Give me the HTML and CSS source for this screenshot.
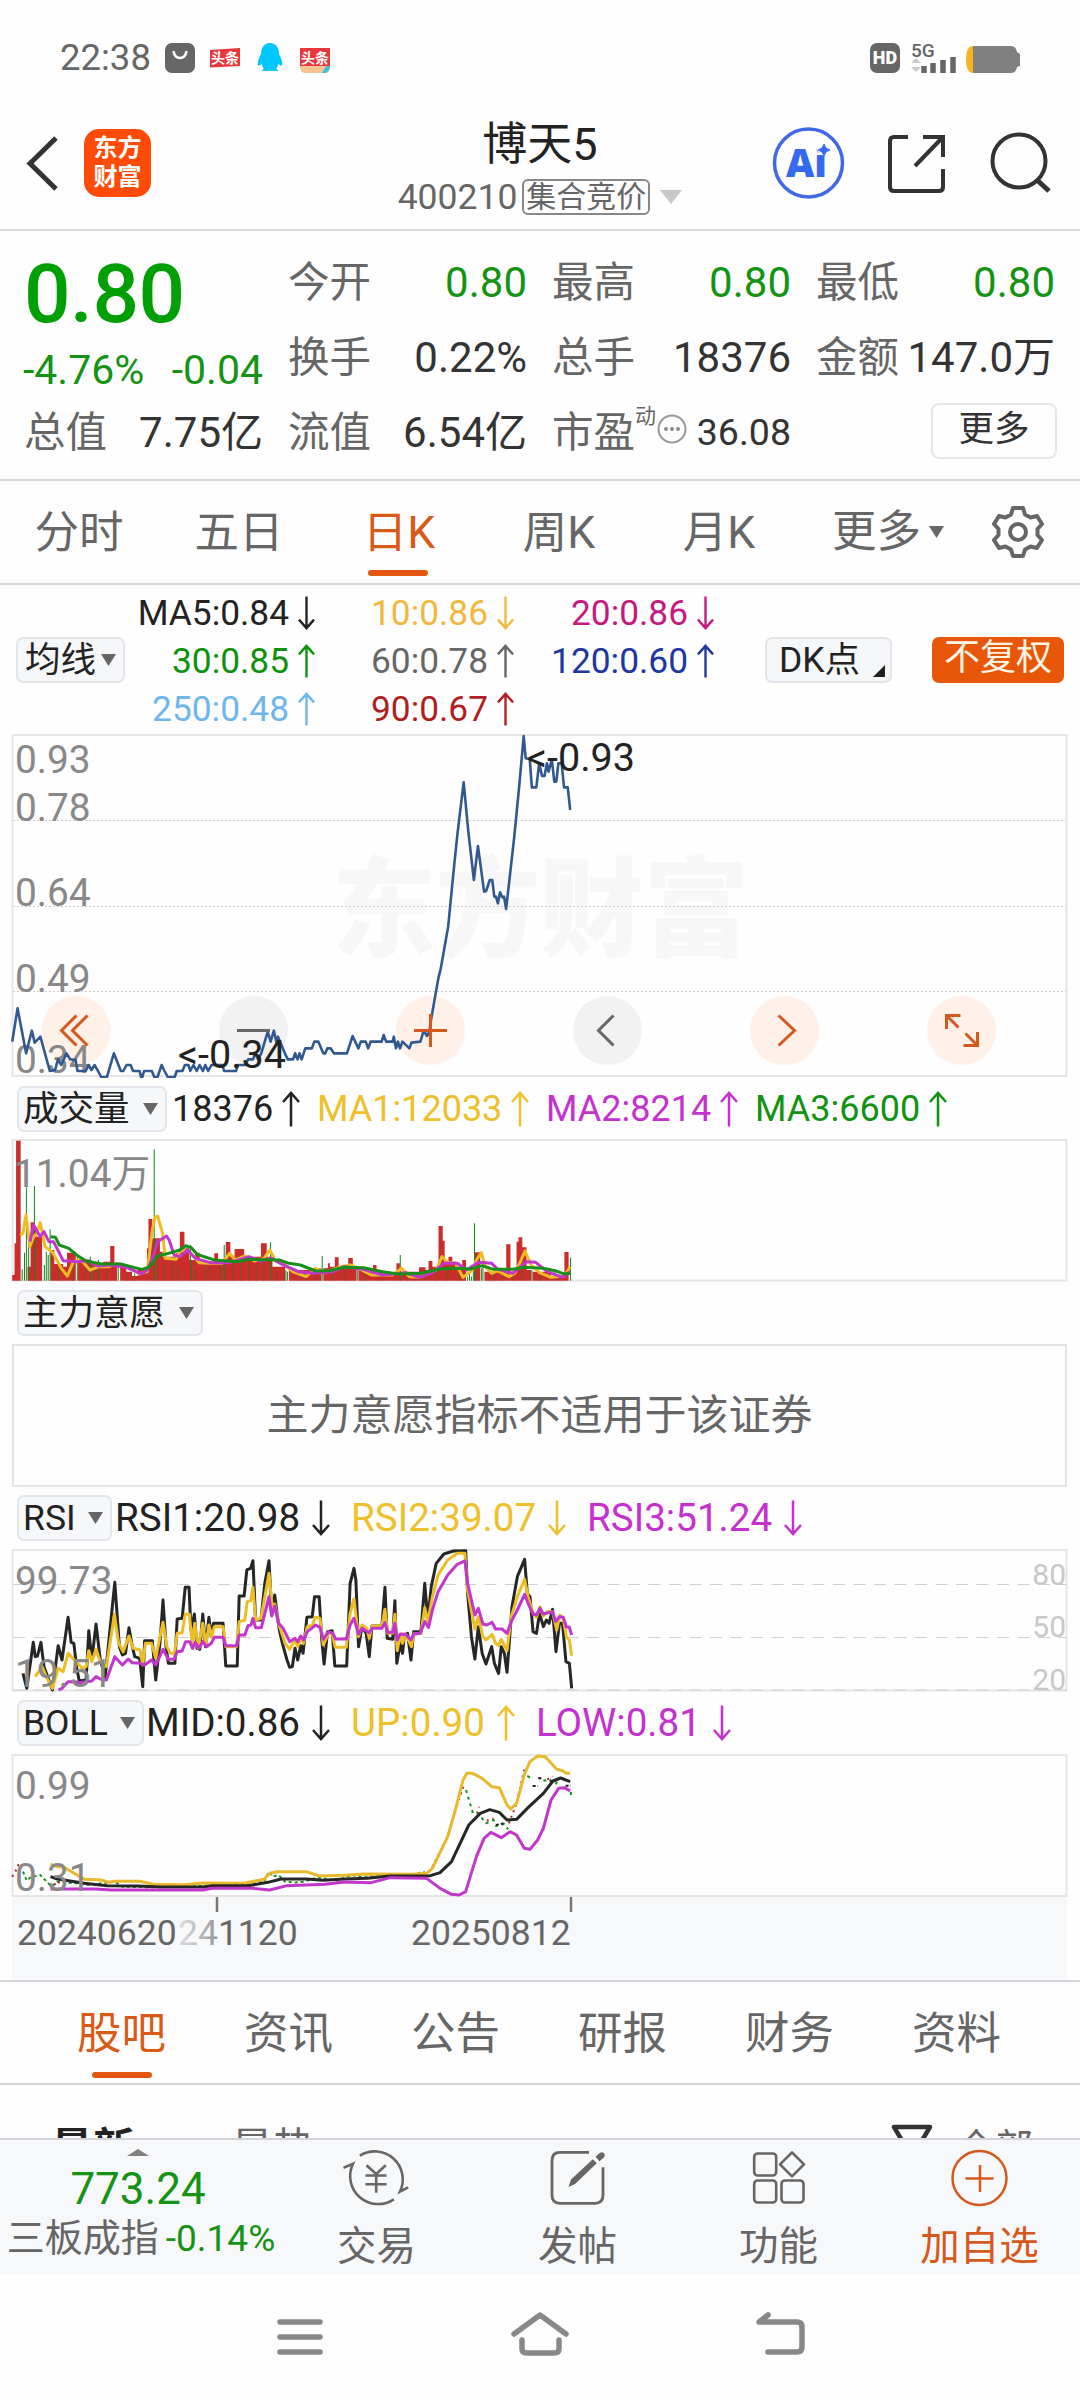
FILE: index.html
```html
<!DOCTYPE html>
<html lang="zh-CN">
<head>
<meta charset="utf-8">
<title>博天5 400210</title>
<link rel="stylesheet" href="styles.css">
</head>
<body>
<svg class="defs" width="0" height="0">
  <symbol id="up" viewBox="0 0 18 36"><path d="M9 35.500V2M1 11L9 2l8 9" fill="none" stroke="currentColor" stroke-width="2.500"/></symbol>
  <symbol id="down" viewBox="0 0 18 36"><path d="M9 .5v33.500M1 25L9 34l8-9" fill="none" stroke="currentColor" stroke-width="2.500"/></symbol>
</svg>
<div class="screen">
  <div class="status">
    <span class="clock">22:38</span>
    <svg class="status-left" width="180" height="40" viewBox="160 37 180 40">
      <rect x="165" y="43" width="30" height="30" rx="7" fill="#666"/>
      <path d="M173.500 51q1 7 6.500 7t6.500-7" fill="none" stroke="#fff" stroke-width="2.500"/>
      <path d="M210 50l30-2v18l-30 1.500z" fill="#e9383c"/>
      <text x="225" y="63" class="tiny">头条</text>
      <path d="M270 43c-6 0-9 5-9 11-2 4-4 8-3 12l4-2c0 2 1 4 2 5-2 1-3 2-2 2h16c1 0 0-1-2-2 1-1 2-3 2-5l4 2c1-4-1-8-3-12 0-6-3-11-9-11z" fill="#00c8ff"/>
      <path d="M300 48h30v18h-30z" fill="#e9383c"/>
      <path d="M300 66h30q0 7-5 7h-20q-5 0-5-7z" fill="#f6c58f"/>
      <path d="M326 66h4q0 6-5 7h-3z" fill="#40bfd8"/>
      <text x="315" y="63" class="tiny">头条</text>
    </svg>
    <svg class="status-right" width="160" height="40" viewBox="865 37 160 40">
      <rect x="870" y="43" width="30" height="30" rx="7" fill="#666"/>
      <text x="885" y="64" class="hd">HD</text>
      <text x="911" y="57" class="net">5G</text>
      <path d="M911 63l5-5 5 5zM911 67l5 5 5-5z" fill="#ccc"/>
      <path d="M924 73v-7M933 73V63M943 73V60M953 73V57" stroke="#666" stroke-width="5.500"/>
      <path d="M973 46h38q5 0 6 6l3 2v12l-3 1q-1 6-6 6h-38z" fill="#808080"/>
      <path d="M973 46h-1q-6 1-6 13.500T972 73h1z" fill="#f7b320"/>
    </svg>
  </div>

  <header class="header">
    <svg class="back" width="40" height="60" viewBox="22 133 40 60"><path d="M56 138L30 163.500l26 25.500" fill="none" stroke="#333" stroke-width="5"/></svg>
    <div class="logo"><span>东方</span><span>财富</span></div>
    <div class="title-box">
      <div class="title">博天5</div>
      <div class="code"><span>400210</span><span class="auction">集合竞价</span><svg width="22" height="14"><path d="M0 0h22L11 14z" fill="#c8c8c8"/></svg></div>
    </div>
    <svg class="header-icons" width="300" height="80" viewBox="765 123 300 80" fill="none" stroke="#333" stroke-width="4">
      <circle cx="808.500" cy="163" r="34" stroke="#4169e6" stroke-width="3.500"/>
      <text x="786" y="177" class="ai">Ai</text>
      <circle cx="824" cy="148.500" r="7" fill="#fefefe" stroke="none"/>
      <path d="M824 144q1 5 6 6-5 1-6 6-1-5-6-6 5-1 6-6z" fill="#356af0" stroke="#356af0" stroke-width="1"/>
      <path d="M908 137h-14q-4 0-4 4v46q0 4 4 4h45q4 0 4-4v-18M923 137h20v20M942 138l-27 28" />
      <circle cx="1019" cy="161" r="26.500"/><path d="M1037 180l12 11" stroke-width="5"/>
    </svg>
  </header>

  <section class="quote">
    <div class="price">0.80</div>
    <div class="pair"><span>今开</span><b class="g">0.80</b></div>
    <div class="pair"><span>最高</span><b class="g">0.80</b></div>
    <div class="pair"><span>最低</span><b class="g">0.80</b></div>
    <div class="pair change g"><b>-4.76%</b><b>-0.04</b></div>
    <div class="pair"><span>换手</span><b>0.22%</b></div>
    <div class="pair"><span>总手</span><b>18376</b></div>
    <div class="pair"><span>金额</span><b>147.0万</b></div>
    <div class="pair"><span>总值</span><b>7.75亿</b></div>
    <div class="pair"><span>流值</span><b>6.54亿</b></div>
    <div class="pair pe"><span>市盈<sup>动</sup></span>
      <svg width="30" height="30" viewBox="0 0 30 30"><circle cx="15" cy="15" r="13.500" fill="none" stroke="#999" stroke-width="2"/><g fill="#888"><circle cx="9" cy="15" r="2"/><circle cx="15" cy="15" r="2"/><circle cx="21" cy="15" r="2"/></g></svg>
      <b>36.08</b></div>
    <div class="more-cell"><span class="more">更多</span></div>
  </section>

  <nav class="periods">
    <span>分时</span><span>五日</span><span class="on">日K</span><span>周K</span><span>月K</span>
    <span class="more-tab">更多<svg width="15" height="13"><path d="M0 0h15L7.500 12z" fill="#666"/></svg></span>
    <svg class="gear" width="54" height="54" viewBox="-27 -27 54 54" fill="none" stroke="#666" stroke-width="4" stroke-linejoin="round"><path d="M-5-24H5L7-17.500 12.500-14.500 19-16 24-8 19.500-3V3L24 8 19 16 12.500 14.500 7 17.500 5 24H-5L-7 17.500-12.500 14.500-19 16-24 8-19.500 3V-3L-24-8-19-16-12.500-14.500-7-17.500z"/><circle r="8"/></svg>
  </nav>

  <section class="averages">
    <span class="chip ma-chip">均线<svg width="15" height="12"><path d="M0 0h15L7.500 12z" fill="#666"/></svg></span>
    <div class="ma-grid">
      <span class="c-5">MA5:0.84<svg><use href="#down"/></svg></span><span class="c-10">10:0.86<svg><use href="#down"/></svg></span><span class="c-20">20:0.86<svg><use href="#down"/></svg></span>
      <span class="c-30">30:0.85<svg><use href="#up"/></svg></span><span class="c-60">60:0.78<svg><use href="#up"/></svg></span><span class="c-120">120:0.60<svg><use href="#up"/></svg></span>
      <span class="c-250">250:0.48<svg><use href="#up"/></svg></span><span class="c-90">90:0.67<svg><use href="#up"/></svg></span>
    </div>
    <span class="chip dk">DK点<svg width="12" height="12"><path d="M12 0v12H0z" fill="#222"/></svg></span>
    <span class="adjust">不复权</span>
  </section>

  <svg class="panel" width="1080" height="344" viewBox="0 734 1080 344">
    <text x="332" y="948" class="watermark" textLength="416" lengthAdjust="spacingAndGlyphs">东方财富</text>
    <g stroke="#ccc" stroke-width="1" stroke-dasharray="2 2"><path d="M13 820.500H1067M13 906.500H1067M13 991.500H1067"/></g>
    <rect class="frame" x="12.500" y="735" width="1054" height="341"/>
    <g fill="#fff0e8"><circle cx="76" cy="1030.500" r="34.500"/><circle cx="430.500" cy="1030.500" r="34.500"/><circle cx="784.500" cy="1030.500" r="34.500"/><circle cx="961.500" cy="1030.500" r="34.500"/></g>
    <g fill="#f2f2f2"><circle cx="253.500" cy="1030.500" r="34.500"/><circle cx="607.500" cy="1030.500" r="34.500"/></g>
    <g class="axis-label"><text x="15" y="772.500">0.93</text><text x="15" y="821">0.78</text><text x="15" y="906">0.64</text><text x="15" y="992">0.49</text><text x="15" y="1072.500">0.34</text></g>
    <g transform="translate(0 720) scale(.40816 .33333)" class="lines price-line">
      <polyline points="30,965 43,865 64,1000 78,932 85,968 99,950 122,1053 135,1050 142,1018 150,1035 163,1000 172,1018 185,1020 190,1053 210,1053 217,1035 224,1050 232,1035 248,1071 262,1071 279,1000 296,1053 302,1053 310,1035 320,1035 326,1053 342,1053 347,1078 353,1053 372,1053 378,1071 386,1071 396,1035 403,1053 411,1071 428,1071 433,1053 447,1053 453,1035 462,1035 466,1053 474,1035 482,1053 489,1035 497,1053 503,1035 510,1053 518,1035 545,1035 549,1053 578,1053 583,1035 600,1035 608,1018 620,1018 626,1000 632,1018 640,1000 656,935 663,965 671,932 677,965 681,950 698,1000 705,1018 718,1018 723,1000 729,1018 734,1000 739,1018 748,985 764,985 770,965 780,965 792,1000 797,1000 802,985 810,985 818,1000 850,1000 864,948 878,985 884,965 896,965 902,985 908,965 935,965 940,945 946,965 962,965 965,950 970,985 975,965 980,985 986,965 1003,985 1008,968 1030,965 1038,932 1046,948 1052,935 1056,900 1066,830 1074,775 1080,745 1098,620 1110,470 1120,350 1136,187 1147,330 1161,480 1171,378 1180,460 1186,515 1191,513 1200,480 1206,480 1211,530 1215,530 1220,550 1225,517 1231,532 1235,530 1240,567 1260,350 1272,200 1283,48 1288,115 1298,118 1303,202 1314,202 1321,130 1328,168 1334,168 1340,130 1344,155 1352,118 1358,185 1363,185 1368,130 1376,130 1382,202 1391,202 1397,270"/>
    </g>
    <g class="mark"><text x="527" y="770.500">&lt;-0.93</text><text x="178" y="1067.500">&lt;-0.34</text></g>
    <g fill="none" stroke="#d5591d" stroke-width="3"><path d="M76.500 1015.500l-15 15 15 15M87.500 1015.500l-15 15 15 15M414 1030.500h33M430.500 1014v33M778.500 1015.500l16 15-16 15"/><path d="M946.500 1029v-13.500h14M946.500 1015.500l12 12M977.500 1032v13.500h-14M977.500 1045.500l-12-12"/></g>
    <g fill="none" stroke="#666" stroke-width="3"><path d="M237 1030.500h33M613.500 1015.500l-15 15 15 15"/></g>
  </svg>

  <div class="ind vol">
    <span class="chip">成交量<svg width="15" height="12"><path d="M0 0h15L7.500 12z" fill="#666"/></svg></span>
    <span class="i1">18376<svg><use href="#up"/></svg></span><span class="i2">MA1:12033<svg><use href="#up"/></svg></span><span class="i3">MA2:8214<svg><use href="#up"/></svg></span><span class="i4">MA3:6600<svg><use href="#up"/></svg></span>
  </div>
  <svg class="panel" width="1080" height="143" viewBox="0 1139 1080 143">
    <rect class="frame" x="12.500" y="1140" width="1054" height="140.500"/>
    <g transform="translate(0 1070) scale(.38265 .33333)" class="lines">
      <path fill="#cb2d2c" stroke="none" d="M32 632V615H38V520H42V212H54V632ZM72 632V590H80V457H90V470H95V500H110V632ZM132 632V540H142V582H165V590H175V548H188V545H198V632ZM204 632V570H215V572H240V580H258V578H270V575H288V528H299V580H306V632ZM314 632V585H330V605H345V618H360V600H384V535H388V447H398V505H418V545H425V560H460V550H470V485H482V535H495V570H510V548H522V575H560V550H570V575H590V516H602V560H613V537H638V560H682V520H697V560H712V590H745V632ZM755 632V600H815V595H840V632ZM845 632V595H857V580H862V590H875V562H885V588H910V564H922V590H932V632ZM937 632V595H975V585H984V605H1020V610H1036V580H1045V605H1095V592H1112V600H1120V573H1130V590H1146V468H1157V512H1162V575H1172V560H1182V580H1190V600H1208V570H1218V632ZM1240 632V547H1255V632ZM1266 632V605H1323V523H1334V605H1350V515H1355V502H1365V532H1376V600H1388V632ZM1392 632V605H1440V618H1475V546H1486V632Z"/>
      <path stroke="#12851a" stroke-width="1" d="M58 632V598M64 632V548M69 632V352M75 632V500M90 632V348M116 632V585M121 632V545M126 632V555M131 632V478M202 632V560M236 632V560M257 632V570M309 632V580M403 632V238M498 632V525M586 632V525M707 632V517M747 632V600M751 632V605M842 632V558M935 632V590M1046 632V555M1222 632V620M1227 632V612M1232 632V620M1237 632V600M1240 632V460M1258 632V595M1262 632V590M1390 632V600M1450 632V603M1491 632V563"/>
      <path stroke="#74551c" stroke-width="1" d="M154 632V590M190 632V575M222 632V580M246 632V590M278 632V585M332 632V605M352 632V610M412 632V570M430 632V580M450 632V570M466 632V590M510 632V600M536 632V582M550 632V590M576 632V585M610 632V570M630 632V580M650 632V570M670 632V585M690 632V570M725 632V600M780 632V610M800 632V605M825 632V605M870 632V600M900 632V600M955 632V605M990 632V612M1065 632V615M1085 632V610M1108 632V605M1140 632V600M1170 632V600M1200 632V605M1290 632V610M1315 632V615M1342 632V610M1365 632V600M1412 632V615M1430 632V615"/>
      <polyline stroke="#edbd24" points="53,495 60,490 68,435 78,530 88,500 97,490 105,458 118,530 138,548 160,595 176,618 192,575 210,568 235,600 260,590 285,590 305,580 330,588 365,612 385,605 398,480 405,442 412,438 425,490 432,565 460,568 470,545 485,540 500,550 520,578 545,580 580,580 600,550 615,570 640,558 665,573 690,565 705,540 720,573 745,585 765,605 800,620 825,595 850,608 885,592 915,585 945,600 970,615 1025,615 1050,595 1070,620 1095,622 1140,600 1155,560 1170,578 1190,578 1210,622 1235,600 1245,570 1258,548 1268,590 1285,610 1300,602 1330,620 1345,610 1358,580 1372,543 1388,585 1410,608 1440,622 1475,618 1490,590"/>
      <polyline stroke="#c236cc" points="78,515 88,465 105,500 115,485 128,515 140,515 165,572 200,575 230,572 255,588 290,585 330,592 370,612 385,600 400,560 412,515 435,498 442,510 455,555 470,560 490,540 510,565 550,578 600,578 650,560 680,573 710,565 740,585 780,605 820,610 870,605 900,590 950,598 1000,615 1060,608 1095,622 1130,608 1160,580 1195,580 1220,600 1250,577 1285,580 1300,597 1340,610 1375,575 1400,577 1430,605 1470,622 1490,605"/>
      <polyline stroke="#178f1b" points="132,500 145,502 155,525 180,535 200,555 225,573 265,582 315,582 370,598 388,592 412,558 440,550 470,540 485,527 500,533 515,553 560,570 620,575 650,568 730,570 755,580 785,585 825,603 860,602 900,592 950,593 1000,605 1040,612 1100,610 1150,597 1190,595 1230,597 1260,587 1290,598 1340,598 1370,592 1420,595 1450,602 1475,612 1490,610"/>
    </g>
    <text x="14" y="1187" class="axis-text">11.04万</text>
  </svg>

  <div class="ind"><span class="chip">主力意愿<svg width="15" height="12"><path d="M0 0h15L7.500 12z" fill="#666"/></svg></span></div>
  <div class="empty">主力意愿指标不适用于该证券</div>

  <div class="ind rsi">
    <span class="chip">RSI<svg width="15" height="12"><path d="M0 0h15L7.500 12z" fill="#666"/></svg></span>
    <span class="i1">RSI1:20.98<svg><use href="#down"/></svg></span><span class="i2">RSI2:39.07<svg><use href="#down"/></svg></span><span class="i3">RSI3:51.24<svg><use href="#down"/></svg></span>
  </div>
  <svg class="panel" width="1080" height="143" viewBox="0 1549 1080 143">
    <rect class="frame" x="12.500" y="1550" width="1054" height="140.500"/>
    <path stroke="#d0d0d0" stroke-width="1.200" stroke-dasharray="12 8.500" d="M13 1584.500H1067M13 1637.500H1067M13 1690H1067"/>
    <g transform="translate(0 1480) scale(.38265 .33333)" class="lines">
      <polyline stroke="#262626" points="60,580 70,625 87,487 92,530 98,528 107,487 115,560 137,630 152,497 162,540 178,412 186,487 193,490 200,560 207,603 225,600 232,452 240,540 251,432 262,540 275,590 300,307 312,500 320,525 328,520 337,443 346,500 352,530 365,535 373,620 378,482 398,482 407,600 418,490 426,360 434,500 440,550 457,550 463,417 476,415 484,322 494,322 499,450 508,402 515,505 522,508 530,402 537,500 546,412 552,470 558,430 583,430 590,558 620,558 625,348 638,348 645,270 655,265 661,242 668,420 682,420 692,310 703,242 710,400 718,345 724,400 730,450 738,490 750,540 757,562 764,560 771,505 778,540 786,497 792,520 802,412 816,410 822,350 834,350 841,480 847,552 856,455 868,452 875,558 906,558 915,310 925,265 930,300 937,500 946,440 957,460 965,530 972,438 998,438 1006,322 1012,475 1026,478 1032,362 1037,550 1046,490 1052,520 1057,465 1065,460 1074,540 1081,455 1100,455 1110,310 1118,420 1127,320 1140,250 1160,222 1185,213 1217,212 1222,340 1232,470 1241,537 1250,440 1260,520 1270,552 1285,500 1292,550 1303,580 1310,500 1318,520 1325,577 1338,380 1352,290 1371,238 1378,340 1385,350 1393,455 1402,460 1410,400 1420,440 1428,420 1435,430 1444,388 1453,515 1462,430 1470,430 1479,545 1488,550 1494,625"/>
      <polyline stroke="#edbd24" points="92,590 110,560 125,600 137,625 152,565 165,575 178,520 190,535 215,565 225,560 232,512 240,545 251,508 262,545 278,560 299,403 310,490 322,515 337,468 348,505 366,510 373,555 380,490 396,490 407,535 418,470 426,427 436,500 445,520 456,520 463,460 476,458 484,403 495,403 502,490 509,430 518,505 530,430 538,495 546,435 553,470 560,440 583,440 590,500 618,500 625,425 640,420 646,365 655,362 661,322 668,420 682,415 703,280 712,390 718,372 728,430 745,490 757,508 771,480 778,500 786,475 793,490 803,440 817,435 823,412 836,415 845,495 858,462 868,460 876,502 905,502 915,400 925,357 937,470 946,435 958,445 965,475 972,438 998,438 1006,388 1013,460 1026,460 1032,403 1038,512 1046,465 1052,490 1060,462 1075,500 1081,462 1100,460 1110,383 1118,425 1130,350 1145,285 1170,240 1195,220 1215,220 1222,330 1241,447 1250,410 1262,470 1270,480 1286,463 1295,490 1303,497 1310,478 1325,512 1336,410 1352,350 1371,298 1380,350 1393,400 1402,412 1411,380 1420,408 1430,395 1444,395 1455,450 1463,405 1472,415 1480,470 1488,480 1494,527"/>
      <polyline stroke="#c236cc" points="153,630 162,625 178,605 195,605 207,608 240,603 251,590 262,597 278,600 300,530 320,555 335,537 345,548 366,550 378,555 396,540 407,555 426,508 440,538 455,538 463,515 476,513 485,485 496,485 503,505 510,487 520,505 530,485 540,500 552,490 560,472 583,472 590,497 618,497 625,465 640,465 648,437 656,435 661,415 668,443 683,443 703,350 710,408 718,378 728,430 740,445 757,485 771,475 778,485 786,468 794,480 803,455 825,435 836,442 845,478 858,455 870,460 877,477 905,477 915,435 925,415 937,462 946,445 960,455 965,458 972,445 998,445 1006,428 1013,457 1026,457 1032,430 1038,480 1046,462 1060,463 1074,480 1081,462 1098,460 1110,425 1120,442 1130,390 1145,335 1170,285 1195,253 1215,243 1222,310 1241,405 1250,385 1262,432 1272,435 1286,427 1295,447 1312,447 1325,460 1336,425 1352,390 1371,343 1380,370 1393,402 1402,405 1411,385 1420,402 1444,395 1452,425 1462,410 1472,412 1480,440 1488,442 1494,465"/>
    </g>
    <g class="axis-label"><text x="15" y="1594">99.73</text><text x="15" y="1687">19.51</text></g>
    <g class="right-label"><text x="1066" y="1585">80</text><text x="1066" y="1637">50</text><text x="1066" y="1690">20</text></g>
  </svg>

  <div class="ind boll">
    <span class="chip">BOLL<svg width="15" height="12"><path d="M0 0h15L7.500 12z" fill="#666"/></svg></span>
    <span class="i1">MID:0.86<svg><use href="#down"/></svg></span><span class="i2">UP:0.90<svg><use href="#up"/></svg></span><span class="i3">LOW:0.81<svg><use href="#down"/></svg></span>
  </div>
  <svg class="panel" width="1080" height="226" viewBox="0 1754 1080 226">
    <defs><linearGradient id="fade" gradientUnits="userSpaceOnUse" x1="176" y1="0" x2="222" y2="0"><stop offset="0" stop-color="#666" stop-opacity=".15"/><stop offset=".9" stop-color="#666" stop-opacity=".65"/><stop offset="1" stop-color="#666"/></linearGradient></defs>
    <rect x="12" y="1897" width="1055" height="83" fill="#f7f8fa"/>
    <rect class="frame" x="12.500" y="1755" width="1054" height="141"/>
    <g transform="translate(0 1690) scale(.38265 .33333)" class="lines">
      <polyline stroke="#178f1b" stroke-width="2" stroke-dasharray="3 3" points="60,545 70,572 80,562 105,555 135,590 150,575 200,580 230,585 300,575 320,590 400,592 470,590 600,585 650,582 690,575 703,545 712,560 728,555 745,575 770,578 795,575 830,562 880,572 920,555 950,562 1010,556 1050,562 1110,545"/>
      <path stroke="#a52a2a" stroke-width="2" stroke-dasharray="2 4" d="M32 560L40 545 50 520M142 585l8-12 10 10M1130 530L1170 440 1190 360 1214 280M1247 370L1252 350M1272 392L1290 385M1330 400L1350 340 1372 230M1407 264h10M1430 268L1445 260"/>
      <path stroke="#178f1b" stroke-width="2" stroke-dasharray="3 4" d="M1218 300L1236 370 1250 370 1270 400 1290 390 1296 408 1318 402 1328 418M1378 258L1390 265M1420 272L1440 268M1452 283L1460 265M1492 306v10"/>
      <path stroke="#222" stroke-width="2" stroke-dasharray="3 2" d="M1392 288h14M1407 265h10M1436 272h16M1465 265l12 2M1478 287h14M1296 405l20-5"/>
      <polyline stroke="#e8b92c" points="132,523 150,530 165,530 220,568 265,570 285,577 300,574 365,574 400,583 480,584 530,579 600,580 640,579 690,568 705,550 725,545 800,545 835,558 900,556 950,552 1080,553 1115,550 1130,535 1170,440 1190,360 1210,270 1220,250 1235,250 1260,265 1285,290 1305,293 1325,345 1335,357 1350,340 1370,255 1385,215 1405,198 1425,200 1455,238 1470,242 1480,250 1490,250"/>
      <polyline stroke="#262626" points="132,560 150,567 220,580 280,587 360,588 420,591 530,591 555,587 650,587 700,577 735,567 800,567 845,571 900,567 960,565 1020,558 1125,557 1150,548 1180,515 1225,405 1255,370 1280,359 1305,367 1325,390 1350,388 1380,353 1420,310 1445,273 1465,264 1490,275"/>
      <polyline stroke="#c236cc" points="132,597 250,597 290,600 530,600 555,595 660,595 705,600 750,587 850,583 900,576 970,578 1020,563 1115,565 1150,595 1180,613 1200,615 1217,605 1245,500 1265,445 1283,427 1310,443 1333,425 1350,435 1370,475 1385,478 1405,450 1420,415 1440,330 1460,295 1475,293 1490,303"/>
    </g>
    <g class="axis-label"><text x="15" y="1799">0.99</text><text x="15" y="1891">0.31</text></g>
    <path d="M217 1897v15M571 1897v15" stroke="#777" stroke-width="2.500"/>
    <g class="date"><text x="17" y="1945">20240620</text><text x="178" y="1945" fill="url(#fade)">241120</text><text x="411" y="1945">20250812</text></g>
  </svg>

  <nav class="sections"><span class="on">股吧</span><span>资讯</span><span>公告</span><span>研报</span><span>财务</span><span>资料</span></nav>

  <div class="feed-bar">
    <span class="newest">最新</span><span class="hot">最热</span>
    <svg class="funnel" width="42" height="40" viewBox="0 0 42 40"><path d="M3 3h36L29 20v14l-16 3V20z" fill="none" stroke="#333" stroke-width="4.500" stroke-linejoin="round"/></svg>
    <span class="all">全部</span>
  </div>

  <footer class="bottom">
    <div class="index">
      <svg width="22" height="7"><path d="M0 7L11 0l11 7z" fill="#808080"/></svg>
      <div class="index-value">773.24</div>
      <div class="index-name">三板成指<b>-0.14%</b></div>
    </div>
    <div class="action"><svg width="68" height="62" viewBox="342.5 2146 68 62" fill="none" stroke="#666" stroke-width="2.600"><path d="M359.300 2155.700A28 28 0 0 1 399.500 2191.500L407.700 2187.300M393.300 2199.300A28 28 0 0 1 352.500 2163.800L343 2167.700"/><path d="M366 2165.300l9.700 8.700 9.600-8.700M365 2175.500h21M365 2184.300h21M375.700 2174v18.700"/></svg><span>交易</span></div>
    <div class="action"><svg width="68" height="62" viewBox="543.5 2146 68 62" fill="none" stroke="#666" stroke-width="2.800"><path d="M588.500 2152.300h-29q-8 0-8 8v35q0 8 8 8h35q8 0 8-8v-28"/><path d="M568 2187l2.500-7.500 21.800-20.200 4 4-21.800 20.700zM595 2156.700l4.500-4q3-1.500 4.500 1 .8 2-.7 3.800l-4.300 3.800z" fill="#666" stroke="none"/></svg><span>发帖</span></div>
    <div class="action"><svg width="68" height="62" viewBox="744.5 2146 68 62" fill="none" stroke="#666" stroke-width="2.600"><rect x="753.700" y="2153.500" width="22" height="22" rx="3.500"/><rect x="753.700" y="2180.500" width="22" height="22" rx="3.500"/><rect x="781" y="2180.500" width="22" height="22" rx="3.500"/><path d="M791.500 2152.300l12 12-12 12-12-12z" stroke-linejoin="round"/></svg><span>功能</span></div>
    <div class="action hot-action"><svg width="68" height="62" viewBox="945.5 2146 68 62" fill="none" stroke="#d5591d" stroke-width="2.500"><circle cx="979" cy="2178" r="27"/><path d="M965 2178.500h28M979.500 2165v27"/></svg><span>加自选</span></div>
  </footer>

  <div class="system-nav">
    <svg width="540" height="50" viewBox="270 2309 540 50" fill="none" stroke="#888" stroke-width="5.500" stroke-linecap="round" stroke-linejoin="round"><path d="M280 2322h40M280 2337h40M280 2352h40M514 2334l26-19 26 19M522 2340v9q0 4 5 4h27q5 0 5-4v-9M768 2352h29q5 0 5-5v-20q0-5-5-5h-38l9-7"/></svg>
  </div>
</div>
</body>
</html>
```
FILE: styles.css
```css
* { box-sizing: border-box; }
body { margin: 0; background: #fefefe; font-family: Roboto, "Noto Sans CJK SC", sans-serif; color: #333; }
b { font-weight: 400; }
svg { flex: none; display: block; }
.defs { position: absolute; }
.screen { width: 1080px; height: 2400px; overflow: hidden; display: flex; flex-direction: column; }
.screen > * { flex: none; }
.g { color: #149314; }

.status { height: 115px; display: flex; align-items: center; padding: 0 55px 0 60px; color: #666; }
.clock { font-size: 36.5px; width: 100px; line-height: 40px; }
.status-right { margin-left: auto; }
.status svg { margin-top: -1px; }
.tiny { font-size: 14px; font-weight: 700; fill: #fff; text-anchor: middle; }
.hd { font-size: 18px; font-weight: 900; fill: #fff; text-anchor: middle; }
.net { font-size: 19px; font-weight: 500; fill: #666; }

.header { height: 116px; border-bottom: 2px solid #d8d8d8; display: grid; grid-template-columns: 62px 300px 312px 1fr; padding-left: 22px; align-items: start; }
.back { margin-top: 18px; }
.logo { margin-top: 14px; width: 67px; height: 68px; border-radius: 15px; background: #ff4b05; color: #fff; font-size: 24px; font-weight: 700; line-height: 29px; display: flex; flex-direction: column; justify-content: center; align-items: center; }
.title-box { display: flex; flex-direction: column; align-items: center; }
.title { font-size: 45px; line-height: 58px; padding-top: 1px; color: #222; }
.code { display: flex; align-items: center; font-size: 35.5px; line-height: 36px; color: #666; margin-top: 5px; }
.auction { font-size: 30px; line-height: 32px; border: 2px solid #888; border-radius: 6px; padding: 0 2px; margin: 0 10px 0 5px; }
.header-icons { margin-top: 8px; margin-left: 69px; }
.ai { font: 900 39px "Open Sans", Roboto, sans-serif; fill: #356af0; stroke: none; }

.quote { height: 250px; border-bottom: 2px solid #d8d8d8; padding: 14px 25px 0; display: grid; grid-template-columns: repeat(4, 238px); grid-template-rows: repeat(3, 75px); column-gap: 26px; }
.price { font-size: 82px; font-weight: 500; line-height: 98px; color: #00a005; letter-spacing: -0.5px; margin-left: -1px; }
.pair { display: flex; justify-content: space-between; align-items: center; font-size: 41.5px; line-height: 75px; color: #666; white-space: nowrap; margin-left: -1px; }
.pair b { color: #333; font-size: 42px; }
.pair .g, .change b { color: #149314; }
.change { align-items: flex-end; line-height: 49px; margin-left: -2px; }
.change b { font-size: 41px; }
.pe b { font-size: 37.5px; }
.pe svg { margin-left: -8px; margin-top: -8px; }
.pe sup { font-size: 21px; line-height: 20px; vertical-align: 24px; }
.more-cell { display: flex; justify-content: flex-end; align-items: center; margin-right: -2px; }
.more { width: 126px; height: 56px; margin-bottom: 3px; border: 2px solid #e6e6e6; border-radius: 8px; text-align: center; font-size: 35.5px; line-height: 49px; }

.periods { height: 104px; border-bottom: 2px solid #d8d8d8; display: flex; align-items: stretch; color: #666; font-size: 44.5px; line-height: 104px; }
.periods > span { width: 160px; text-align: center; position: relative; left: -1px; }
.periods .on, .sections .on { color: #d95a17; }
.on::after { content: ""; position: absolute; left: 50%; margin-left: -31px; bottom: 7px; width: 60px; height: 6px; border-radius: 3px; background: #e2570d; }
.periods .more-tab { width: 144px; margin-left: 33px; display: flex; align-items: center; gap: 8px; }
.gear { margin: 24px 0 0 14px; }

.averages { height: 149px; display: flex; align-items: center; padding: 0 16px; }
.chip { display: inline-flex; align-items: center; justify-content: space-between; height: 46px; line-height: 42px; border: 2px solid #e2e5ea; border-radius: 7px; background: #f6f7f9; font-size: 35.5px; color: #222; padding: 0 7px 0 4px; white-space: nowrap; }
.averages .ma-chip { width: 109px; padding: 0 7px 0 7px; }
.ma-grid { display: grid; grid-template-columns: 191px 199px 200px; grid-auto-rows: 48px; height: 144px; font-size: 35.3px; line-height: 48px; margin-top: 2px; }
.ma-grid span { display: flex; justify-content: flex-end; align-items: center; gap: 8px; }
.ma-grid svg { width: 19px; height: 34px; }
.c-5 { color: #222; }
.c-10 { color: #f0b83f; }
.c-20 { color: #c5197f; }
.c-30 { color: #0e920e; }
.c-60 { color: #666; }
.c-120 { color: #2036a0; }
.c-250 { color: #6fb6ec; }
.c-90 { color: #b01e22; }
.dk { width: 127px; margin-left: 50px; padding: 0 5px 0 12px; }
.dk svg { align-self: flex-end; margin-bottom: 4px; }
.adjust { width: 132px; height: 46px; margin-left: 40px; border-radius: 7px; background: #e85707; color: #fff3e6; font-size: 36px; line-height: 43px; text-align: center; }

.frame { fill: none; stroke: #e4e4e4; stroke-width: 1.8; }
.lines { fill: none; stroke-width: 3; stroke-linejoin: round; }
.lines * { vector-effect: non-scaling-stroke; }
.price-line { stroke: #32598f; stroke-width: 2.6; }
.watermark { font-family: "Noto Sans CJK SC", sans-serif; font-size: 108px; font-weight: 900; fill: #f7f7f7; }
.axis-label, .axis-text { font-size: 38.8px; fill: #888; }
.mark { font-size: 39.5px; fill: #222; }
.right-label { font-size: 30px; fill: #c8c8c8; text-anchor: end; }
.date { font-size: 35.5px; fill: #666; }

.ind { height: 62px; padding-left: 17px; display: grid; align-items: center; justify-items: start; grid-template-columns: 186px; line-height: 60px; font-size: 38.6px; }
.ind .chip { width: 100%; }
.ind > span:not(.chip) { display: flex; align-items: center; gap: 12px; white-space: nowrap; }
.ind > span > svg { width: 18px; height: 36px; }
.ind .chip svg { width: 15px; height: 12px; }
.vol { height: 61px; font-size: 36px; grid-template-columns: 150px 149px 229px 209px 220px; }
.ind.vol > span:not(.chip) { gap: 9px; }
.vol .i1 { padding-left: 5px; }
.vol .i2 { padding-left: 1px; }
.vol .i3, .vol .i4 { padding-left: 1px; }
.rsi { grid-template-columns: 95px 239px 236px 240px; }
.rsi .i1 { padding-left: 3px; }
.boll { grid-template-columns: 127px 207px 185px 220px; }
.boll .i1 { padding-left: 2px; }
.i1 { color: #222; }
.i2 { color: #edc02c; }
.i3 { color: #c531cf; }
.i4 { color: #129212; }
.empty { margin: 0 13px 0 12px; height: 143px; border: 2px solid #e4e4e4; text-align: center; font-size: 42px; line-height: 139px; color: #666; }

.sections { height: 105px; border-top: 2px solid #d3d5da; border-bottom: 2px solid #d3d5da; padding: 0 38px; display: grid; grid-template-columns: repeat(6, 167px); font-size: 44.5px; line-height: 104px; color: #666; text-align: center; }
.sections span { position: relative; }
.sections .on::after { margin-left: -30px; bottom: 8px; }

.feed-bar { height: 53px; overflow: hidden; display: flex; align-items: flex-start; padding: 39px 47px 0 51px; font-size: 42px; line-height: 50px; color: #666; }
.newest { font-weight: 700; color: #222; width: 180px; }
.funnel { margin-left: auto; }
.all { font-size: 38px; margin-left: 24px; line-height: 48px; }

.bottom { height: 137px; border-top: 2px solid #d3d5da; background: #f7f8fa; display: grid; grid-template-columns: 276px repeat(4, 201px); color: #666; }
.index { display: flex; flex-direction: column; align-items: center; padding-top: 9px; }
.index-value { color: #149314; font-size: 44px; line-height: 66px; }
.index-name { font-size: 38px; line-height: 42px; white-space: nowrap; margin-top: -5px; padding-left: 6px; }
.index-name b { color: #149314; font-size: 37px; margin-left: 7px; }
.action { display: flex; flex-direction: column; align-items: center; font-size: 39.5px; padding-top: 6px; }
.action span { line-height: 77px; }
.hot-action { color: #d5591d; }

.system-nav { height: 125px; display: flex; justify-content: center; align-items: flex-start; padding-top: 34px; }
```
